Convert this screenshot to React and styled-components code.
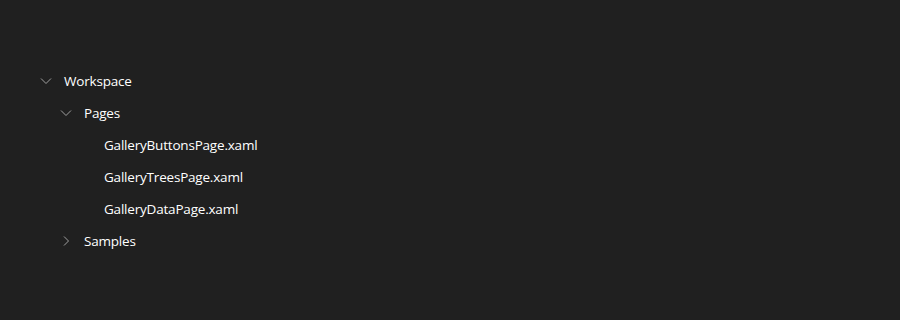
import React from "react";
import styled, { createGlobalStyle } from "styled-components";

const Global = createGlobalStyle`
  html, body { margin: 0; padding: 0; background: #202020; }
  body { font-family: "Segoe UI", "Open Sans", "Noto Sans", sans-serif; }
`;

const Page = styled.div`
  width: 900px;
  height: 320px;
  background: #202020;
  padding: 65px 0 0 36px;
  box-sizing: border-box;
`;

const Tree = styled.ul`
  list-style: none;
  margin: 0;
  padding: 0;
  display: flex;
  flex-direction: column;
`;

const Row = styled.li`
  height: 32px;
  display: flex;
  align-items: center;
  padding-left: ${(p) => p.$level * 20}px;
  color: #ffffff;
  font-size: 13.5px;
  letter-spacing: -0.2px;
`;

const Chevron = styled.span`
  width: 20px;
  height: 20px;
  margin-right: 8px;
  display: flex;
  align-items: center;
  justify-content: center;
  color: #a0a0a0;
`;

const Label = styled.span`
  line-height: 20px;
  white-space: nowrap;
`;

const Down = () => (
  <svg width="12" height="12" viewBox="0 0 12 12" fill="none">
    <path d="M1 3.5 L6 8.5 L11 3.5" stroke="currentColor" strokeWidth="1" />
  </svg>
);
const Right = () => (
  <svg width="12" height="12" viewBox="0 0 12 12" fill="none">
    <path d="M4 1.5 L8.5 6 L4 10.5" stroke="currentColor" strokeWidth="1" />
  </svg>
);

const items = [
  { label: "Workspace", level: 0, icon: "down" },
  { label: "Pages", level: 1, icon: "down" },
  { label: "GalleryButtonsPage.xaml", level: 2 },
  { label: "GalleryTreesPage.xaml", level: 2 },
  { label: "GalleryDataPage.xaml", level: 2 },
  { label: "Samples", level: 1, icon: "right" },
];

export default function App() {
  return (
    <>
      <Global />
      <Page>
        <Tree>
          {items.map((it) => (
            <Row key={it.label} $level={it.level}>
              <Chevron>
                {it.icon === "down" && <Down />}
                {it.icon === "right" && <Right />}
              </Chevron>
              <Label>{it.label}</Label>
            </Row>
          ))}
        </Tree>
      </Page>
    </>
  );
}
